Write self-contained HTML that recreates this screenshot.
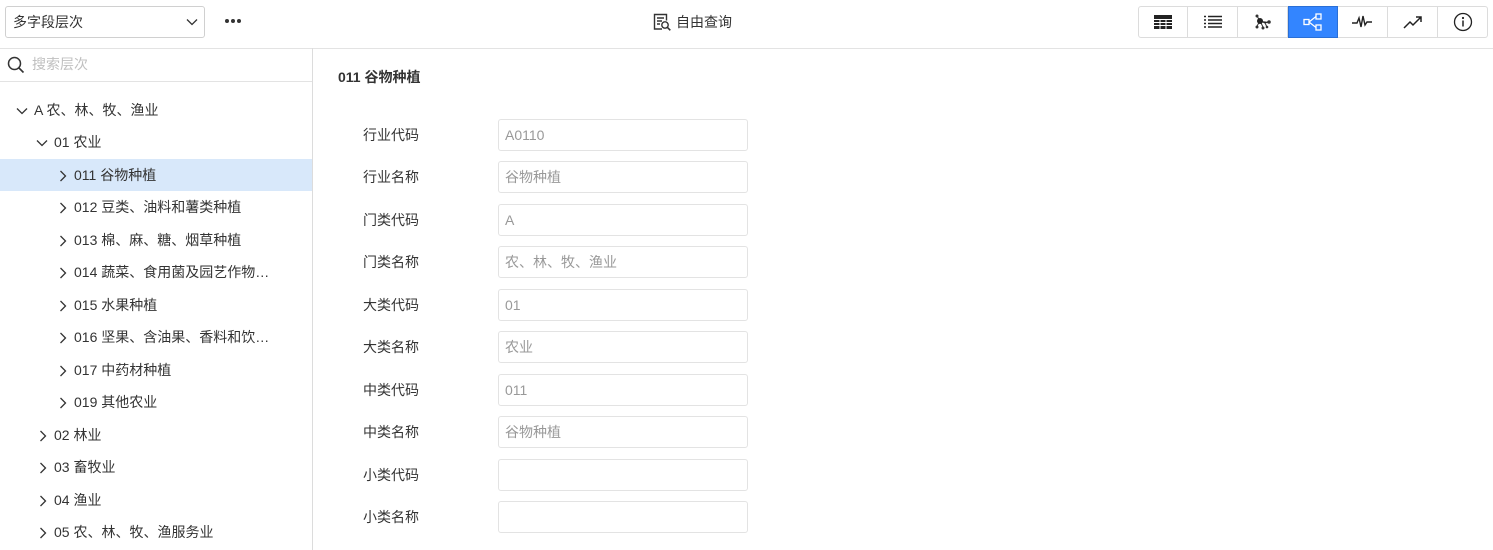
<!DOCTYPE html>
<html><head><meta charset="utf-8"><style>
*{box-sizing:border-box;margin:0;padding:0}
body{width:1493px;height:550px;overflow:hidden;background:#fff;font-family:"Liberation Sans","Noto Sans CJK SC",sans-serif;color:#333;font-size:14px;position:relative}
.a{position:absolute}
.row{position:absolute;left:0;width:312px;height:32px;line-height:32px;white-space:nowrap}
.row svg{position:absolute;top:11px}
.lbl{position:absolute;left:363px;font-size:14px;color:#333}
.inp{position:absolute;left:498px;width:250px;height:32px;border:1px solid #e3e3e3;border-radius:3px;line-height:30px;padding-left:6px;color:#999;font-size:14px}
.btn{position:absolute;top:6px;width:50px;height:32px;border-right:1px solid #dcdcdc;display:flex;align-items:center;justify-content:center}
</style></head><body>
<div class="a" style="left:5px;top:6px;width:200px;height:32px;border:1px solid #d0d0d0;border-radius:3px;line-height:30px;padding-left:7px">多字段层次
<svg class="a" style="left:180px;top:11px" width="12" height="8" viewBox="0 0 12 8"><path d="M1 1.5l5 5 5-5" stroke="#333" stroke-width="1.3" fill="none"/></svg></div>
<svg class="a" style="left:224px;top:18px;display:block" width="18" height="6"><circle cx="3" cy="3" r="2" fill="#333"/><circle cx="9" cy="3" r="2" fill="#333"/><circle cx="15" cy="3" r="2" fill="#333"/></svg>
<div class="a" style="left:653px;top:12px;height:20px;line-height:20px;padding-left:23px">
<svg class="a" style="left:0;top:1px" width="19" height="18" viewBox="0 0 19 18"><path d="M9 16H1.5V1.5h12v6" stroke="#333" stroke-width="1.4" fill="none"/><path d="M4 5h7M4 8h5M4 11h3" stroke="#333" stroke-width="1.4"/><circle cx="12" cy="12" r="3.2" stroke="#333" stroke-width="1.4" fill="none"/><path d="M14.3 14.3l3 3" stroke="#333" stroke-width="1.5"/></svg>自由查询</div>
<div class="a" style="left:1138px;top:6px;width:350px;height:32px;border:1px solid #dcdcdc;border-radius:3px"></div>
<div class="btn" style="left:1138px"><svg width="18" height="14"><rect x="0" y="0" width="18" height="14" fill="#222"/><path d="M0 4.5h18M0 7.5h18M0 10.5h18M6 4v10M12 4v10" stroke="#fff" stroke-width="1"/></svg></div>
<div class="btn" style="left:1188px"><svg width="18" height="14"><path d="M0 1.5h2M4 1.5h14M0 5h2M4 5h14M0 8.5h2M4 8.5h14M0 12h2M4 12h14" stroke="#222" stroke-width="1.5"/></svg></div>
<div class="btn" style="left:1238px"><svg width="20" height="18"><path d="M7 8L4 3M7 8l5 2 4-1M7 8l-3 5M7 8l3 6M12 10l2 4" stroke="#333" stroke-width="1"/><circle cx="7" cy="8" r="3" fill="#222"/><circle cx="4" cy="3" r="1.5" fill="#333"/><circle cx="16" cy="9" r="1.8" fill="#333"/><circle cx="4" cy="14" r="1.5" fill="#333"/><circle cx="10" cy="15" r="1.5" fill="#333"/><circle cx="14" cy="14" r="1.3" fill="#333"/></svg></div>
<div class="btn" style="left:1288px;background:#3385ff;top:6px;height:32px;border:1px solid #2a6fd6"><svg width="20" height="18"><rect x="1" y="6.5" width="5" height="5" stroke="#fff" fill="none" stroke-width="1.3"/><rect x="13" y="1" width="5" height="5" stroke="#fff" fill="none" stroke-width="1.3"/><rect x="13" y="12" width="5" height="5" stroke="#fff" fill="none" stroke-width="1.3"/><path d="M6 9l7-5.5M6 9l7 5.5" stroke="#fff" stroke-width="1.2"/></svg></div>
<div class="btn" style="left:1338px"><svg width="22" height="14"><path d="M0 8h5l2-5 2 9 2-11 2 9 2-3h5" stroke="#222" stroke-width="1.4" fill="none"/></svg></div>
<div class="btn" style="left:1388px"><svg width="20" height="14"><path d="M1 13l6-6 3 3 8-8M13 2h5v5" stroke="#222" stroke-width="1.5" fill="none"/></svg></div>
<div class="btn" style="left:1438px;border-right:none"><svg width="20" height="20"><circle cx="10" cy="10" r="8.5" stroke="#222" stroke-width="1.3" fill="none"/><circle cx="10" cy="6" r="1.1" fill="#222"/><path d="M10 8.5v6" stroke="#222" stroke-width="1.5"/></svg></div>
<div class="a" style="left:0;top:48px;width:1493px;height:1px;background:#e3e3e3"></div>
<div class="a" style="left:312px;top:48px;width:1px;height:502px;background:#dcdcdc"></div>
<svg class="a" style="left:7px;top:56px" width="18" height="18"><circle cx="7.5" cy="7.5" r="6" stroke="#333" stroke-width="1.5" fill="none"/><path d="M12 12l4.5 4.5" stroke="#333" stroke-width="1.6"/></svg>
<div class="a" style="left:32px;top:54px;color:#c0c0c0;line-height:20px">搜索层次</div>
<div class="a" style="left:0;top:81px;width:312px;height:1px;background:#e3e3e3"></div>
<div class="row" style="top:94px"><svg style="left:16px;top:13px" width="12" height="8"><path d="M1 1.5l5 5 5-5" stroke="#333" stroke-width="1.3" fill="none"/></svg><span class="a" style="left:34px">A 农、林、牧、渔业</span></div>
<div class="row" style="top:126px"><svg style="left:36px;top:13px" width="12" height="8"><path d="M1 1.5l5 5 5-5" stroke="#333" stroke-width="1.3" fill="none"/></svg><span class="a" style="left:54px">01 农业</span></div>
<div class="row" style="top:159px;background:#d8e8fa"><svg style="left:59px" width="8" height="12"><path d="M1.5 1l5 5-5 5" stroke="#333" stroke-width="1.3" fill="none"/></svg><span class="a" style="left:74px">011 谷物种植</span></div>
<div class="row" style="top:191px"><svg style="left:59px" width="8" height="12"><path d="M1.5 1l5 5-5 5" stroke="#333" stroke-width="1.3" fill="none"/></svg><span class="a" style="left:74px">012 豆类、油料和薯类种植</span></div>
<div class="row" style="top:224px"><svg style="left:59px" width="8" height="12"><path d="M1.5 1l5 5-5 5" stroke="#333" stroke-width="1.3" fill="none"/></svg><span class="a" style="left:74px">013 棉、麻、糖、烟草种植</span></div>
<div class="row" style="top:256px"><svg style="left:59px" width="8" height="12"><path d="M1.5 1l5 5-5 5" stroke="#333" stroke-width="1.3" fill="none"/></svg><span class="a" style="left:74px">014 蔬菜、食用菌及园艺作物…</span></div>
<div class="row" style="top:289px"><svg style="left:59px" width="8" height="12"><path d="M1.5 1l5 5-5 5" stroke="#333" stroke-width="1.3" fill="none"/></svg><span class="a" style="left:74px">015 水果种植</span></div>
<div class="row" style="top:321px"><svg style="left:59px" width="8" height="12"><path d="M1.5 1l5 5-5 5" stroke="#333" stroke-width="1.3" fill="none"/></svg><span class="a" style="left:74px">016 坚果、含油果、香料和饮…</span></div>
<div class="row" style="top:354px"><svg style="left:59px" width="8" height="12"><path d="M1.5 1l5 5-5 5" stroke="#333" stroke-width="1.3" fill="none"/></svg><span class="a" style="left:74px">017 中药材种植</span></div>
<div class="row" style="top:386px"><svg style="left:59px" width="8" height="12"><path d="M1.5 1l5 5-5 5" stroke="#333" stroke-width="1.3" fill="none"/></svg><span class="a" style="left:74px">019 其他农业</span></div>
<div class="row" style="top:419px"><svg style="left:39px" width="8" height="12"><path d="M1.5 1l5 5-5 5" stroke="#333" stroke-width="1.3" fill="none"/></svg><span class="a" style="left:54px">02 林业</span></div>
<div class="row" style="top:451px"><svg style="left:39px" width="8" height="12"><path d="M1.5 1l5 5-5 5" stroke="#333" stroke-width="1.3" fill="none"/></svg><span class="a" style="left:54px">03 畜牧业</span></div>
<div class="row" style="top:484px"><svg style="left:39px" width="8" height="12"><path d="M1.5 1l5 5-5 5" stroke="#333" stroke-width="1.3" fill="none"/></svg><span class="a" style="left:54px">04 渔业</span></div>
<div class="row" style="top:516px"><svg style="left:39px" width="8" height="12"><path d="M1.5 1l5 5-5 5" stroke="#333" stroke-width="1.3" fill="none"/></svg><span class="a" style="left:54px">05 农、林、牧、渔服务业</span></div>
<div class="a" style="left:338px;top:67px;font-weight:bold;line-height:20px">011 谷物种植</div>
<div class="lbl" style="top:125px">行业代码</div><div class="inp" style="top:119px">A0110</div>
<div class="lbl" style="top:167px">行业名称</div><div class="inp" style="top:161px">谷物种植</div>
<div class="lbl" style="top:210px">门类代码</div><div class="inp" style="top:204px">A</div>
<div class="lbl" style="top:252px">门类名称</div><div class="inp" style="top:246px">农、林、牧、渔业</div>
<div class="lbl" style="top:295px">大类代码</div><div class="inp" style="top:289px">01</div>
<div class="lbl" style="top:337px">大类名称</div><div class="inp" style="top:331px">农业</div>
<div class="lbl" style="top:380px">中类代码</div><div class="inp" style="top:374px">011</div>
<div class="lbl" style="top:422px">中类名称</div><div class="inp" style="top:416px">谷物种植</div>
<div class="lbl" style="top:465px">小类代码</div><div class="inp" style="top:459px"></div>
<div class="lbl" style="top:507px">小类名称</div><div class="inp" style="top:501px"></div>
</body></html>
